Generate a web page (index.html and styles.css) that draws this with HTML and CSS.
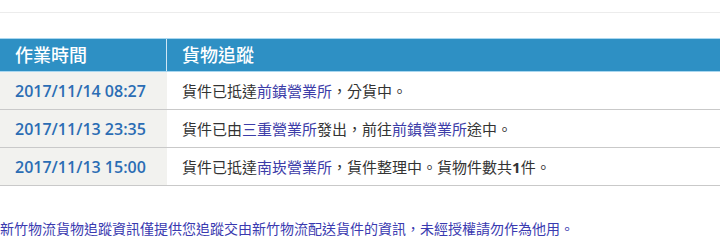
FILE: index.html
```html
<!DOCTYPE html>
<html lang="zh-Hant">
<head>
<meta charset="utf-8">
<link rel="stylesheet" href="styles.css">
</head>
<body>
<div class="topbar"></div>
<table class="track">
  <thead>
    <tr><th class="c-time">作業時間</th><th class="c-desc">貨物追蹤</th></tr>
  </thead>
  <tbody>
    <tr><td class="c-time">2017/11/14 08:27</td><td class="c-desc">貨件已抵達<a class="lnk">前鎮營業所</a>，分貨中。</td></tr>
    <tr><td class="c-time">2017/11/13 23:35</td><td class="c-desc">貨件已由<a class="lnk">三重營業所</a>發出，前往<a class="lnk">前鎮營業所</a>途中。</td></tr>
    <tr><td class="c-time">2017/11/13 15:00</td><td class="c-desc">貨件已抵達<a class="lnk">南崁營業所</a>，貨件整理中。貨物件數共<b>1</b>件。</td></tr>
  </tbody>
</table>
<p class="note">新竹物流貨物追蹤資訊僅提供您追蹤交由新竹物流配送貨件的資訊，未經授權請勿作為他用。</p>
</body>
</html>
```
FILE: styles.css
```css
html, body { margin: 0; padding: 0; background: #fff; }
body { font-family: "Open Sans", "Noto Sans CJK TC", sans-serif; color: #333; }
.topbar { height: 12px; border-bottom: 1px solid #ececec; margin-bottom: 25px; }
.track { width: 720px; border-collapse: collapse; border-spacing: 0; }
.track th {
  background: #2e90c4; color: #fff; font-size: 18px; font-weight: 500;
  text-align: left; height: 32px; padding: 0 15px; line-height: 32px;
  border-top: 1px solid #a9d7f0; border-bottom: 1px solid #a9d7f0;
}
.track th.c-desc { border-left: 1px solid #cfe6f4; }
.track .c-time { width: 136px; }
.track td {
  height: 37px; padding: 0 15px; border-bottom: 1px solid #c9c9c9;
  font-size: 15px; line-height: 20px; vertical-align: middle;
}
.track td.c-time { background: #f2f2ef; color: #2b6db4; font-weight: 600; font-size: 16px; }
.track td.c-desc { border-left: 1px solid #f2f2ef; }
.lnk { color: #3c3ca8; text-decoration: none; }
.note { margin: 33px 0 0; font-size: 14px; color: #3a3ab0; line-height: 20px; }
```
